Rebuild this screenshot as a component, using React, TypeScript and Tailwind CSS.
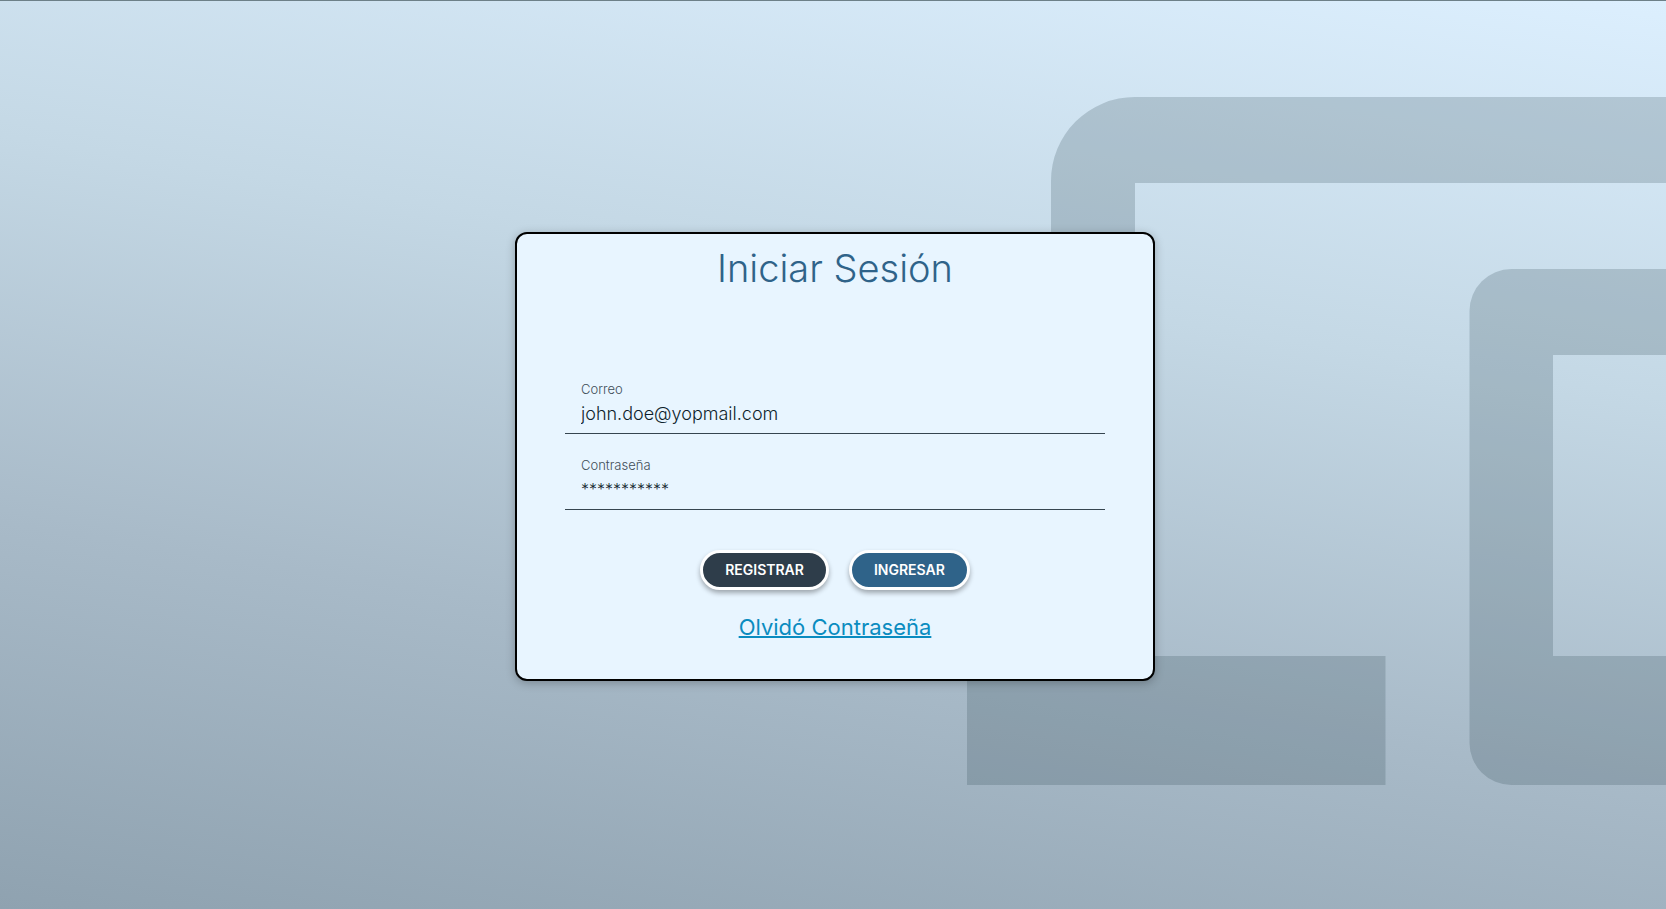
function Backdrop() {
  return (
    <svg
      className="absolute inset-0 -z-10 h-full w-full"
      viewBox="0 0 1666 909"
      preserveAspectRatio="xMidYMid slice"
      aria-hidden="true"
    >
      <g fill="#233b46" fillOpacity="0.2" transform="translate(0 -0.5)">
        <path d="M1780 97H1135A84 84 0 0 0 1051 181V656H967V785H1385.500V656H1135V183H1780Z" />
        <path
          fillRule="evenodd"
          d="M1780 269H1511.500A42 42 0 0 0 1469.500 311V743A42 42 0 0 0 1511.500 785H1780ZM1553 355H1780V656H1553Z"
        />
      </g>
    </svg>
  );
}

type FieldProps = { id: string; label: string; value: string; size: string };

function Field({ id, label, value, size }: FieldProps) {
  return (
    <div className="flex h-[60px] flex-col border-b border-[#36454f] px-4 pt-[7px]">
      <label htmlFor={id} className="text-[13px] leading-4 font-light text-[#3f4d58]">
        {label}
      </label>
      <input
        id={id}
        type="text"
        defaultValue={value}
        className={`h-8 w-full bg-transparent font-light text-[#0f1f2c] outline-none ${size}`}
      />
    </div>
  );
}

const buttonClass =
  "h-10 rounded-full border-3 border-white px-[22px] text-sm font-semibold text-white shadow-[0_3px_5px_rgba(0,0,0,0.32)]";

export default function App() {
  return (
    <main className="relative isolate flex min-h-screen items-center justify-center border-t border-[#6d8088] bg-[linear-gradient(189deg,#dceffe_0%,#c4d8e5_34%,#a8bac8_67%,#8fa2b0_100%)] pt-[3px] pr-4 pl-5 font-['Inter',sans-serif]">
      <Backdrop />
      <form
        className="flex w-full max-w-[640px] flex-col rounded-xl border-2 border-black bg-[#e8f5ff] px-12 pt-2.5 pb-9 shadow-[0_2px_10px_rgba(0,0,0,0.25)]"
        onSubmit={(event) => event.preventDefault()}
      >
        <h1 className="text-center text-[38px] leading-12 font-light text-[#2f6389]">Iniciar Sesión</h1>
        <div className="mt-[82px] flex flex-col gap-4">
          <Field id="correo" label="Correo" value="john.doe@yopmail.com" size="text-lg" />
          <Field id="contrasena" label="Contraseña" value="***********" size="text-base" />
        </div>
        <div className="mt-10 flex justify-center gap-5">
          <button type="button" className={`${buttonClass} bg-[#2e3d4a]`}>
            REGISTRAR
          </button>
          <button type="submit" className={`${buttonClass} bg-[#2f6389]`}>
            INGRESAR
          </button>
        </div>
        <a
          href="#recuperar"
          className="mt-[21px] self-center text-[22px] leading-8 text-[#0a8cc0] underline decoration-2"
        >
          Olvidó Contraseña
        </a>
      </form>
    </main>
  );
}
